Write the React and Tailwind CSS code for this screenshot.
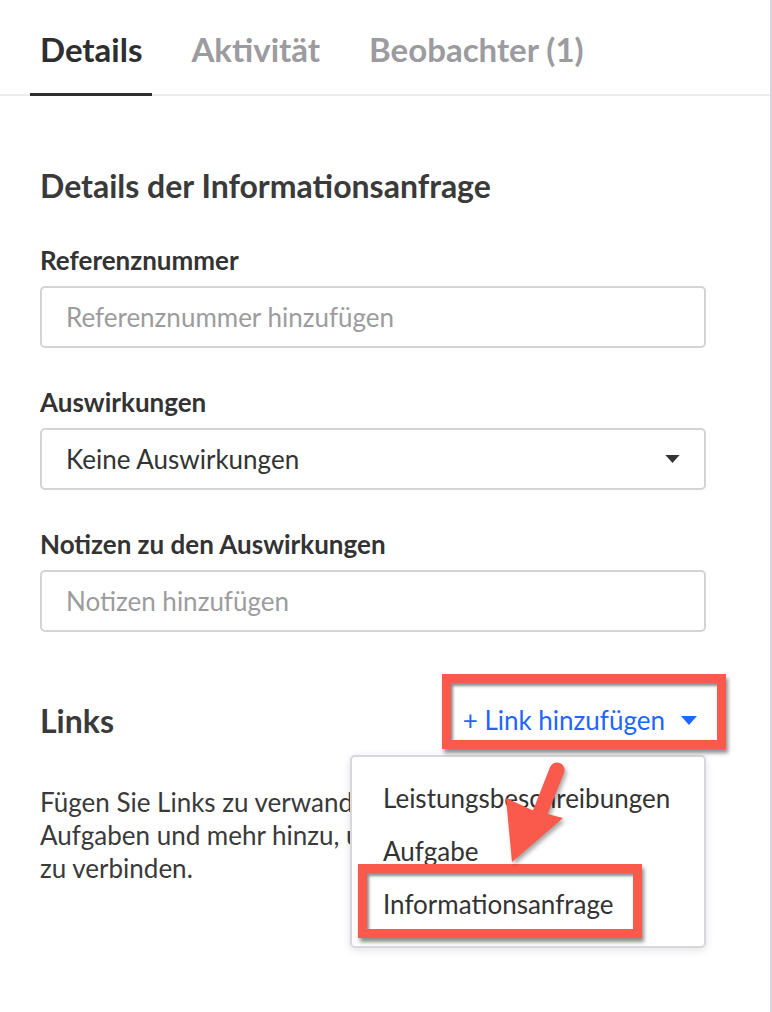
const font = { fontFamily: "Lato, 'Open Sans', sans-serif" };

function Caret({ className }) {
  return (
    <svg viewBox="0 0 16 9" className={className} fill="currentColor">
      <path d="M0 0h16L8 9z" />
    </svg>
  );
}

function Field({ label, children }) {
  return (
    <div>
      <div className="text-[26px] leading-[28px] font-bold text-[#333]">{label}</div>
      <div className="mt-3">{children}</div>
    </div>
  );
}

export default function App() {
  const tabs = ["Details", "Aktivität", "Beobachter (1)"];
  return (
    <div className="relative w-[772px] h-[1012px] bg-white border-r-2 border-[#d6d6da] overflow-hidden" style={font}>
      {/* Tabs */}
      <div className="flex gap-[29px] pl-[30px] border-b-2 border-[#ececee] h-[96px]">
        {tabs.map((t, i) => (
          <div
            key={t}
            className={
              "px-[10px] pt-[6px] flex items-center text-[33px] font-bold -mb-[2px] " +
              (i === 0 ? "text-[#2e2e30] border-b-[3px] border-[#2e2e30]" : "text-[#9b9ba0] border-b-[3px] border-transparent")
            }
          >
            {t}
          </div>
        ))}
      </div>

      <div className="pl-10 pr-[64px] pt-[73px]">
        <h2 className="text-[32px] leading-[34px] font-bold text-[#3a3a3a]">Details der Informationsanfrage</h2>

        <div className="mt-[43px] flex flex-col gap-10">
          <Field label="Referenznummer">
            <div className="h-[62px] rounded-[5px] border-2 border-[#d4d4d6] flex items-center px-[24px] text-[26px] text-[#9c9c9e]">
              Referenznummer hinzufügen
            </div>
          </Field>
          <Field label="Auswirkungen">
            <div className="h-[62px] rounded-[5px] border-2 border-[#d4d4d6] flex items-center justify-between pl-[24px] pr-[24px] text-[26px] text-[#333]">
              <span>Keine Auswirkungen</span>
              <Caret className="w-[15px] h-[8px] text-[#333]" />
            </div>
          </Field>
          <Field label="Notizen zu den Auswirkungen">
            <div className="h-[62px] rounded-[5px] border-2 border-[#d4d4d6] flex items-center px-[24px] text-[26px] text-[#9c9c9e]">
              Notizen hinzufügen
            </div>
          </Field>
        </div>

        <div className="mt-[69px] flex items-center justify-between">
          <h2 className="text-[32px] leading-[34px] font-bold text-[#3a3a3a]">Links</h2>
          <div className="flex items-center gap-4 pr-[9px] text-[26px] text-[#1f66ff]">
            <span>+ Link hinzufügen</span>
            <Caret className="w-[16px] h-[9px]" />
          </div>
        </div>

        <p className="mt-[46px] text-[26px] leading-[33px] text-[#3a3a3a]">
          Fügen Sie Links zu verwandten Elementen,
          <br />
          Aufgaben und mehr hinzu, um Informationen
          <br />
          zu verbinden.
        </p>
      </div>

      {/* Dropdown menu */}
      <div className="absolute left-[350px] top-[755px] w-[356px] h-[193px] bg-white border-2 border-[#d8d8dc] rounded-[5px] shadow-[0_2px_8px_rgba(0,0,0,0.12)] pt-[24px] pl-[31px] flex flex-col text-[26px] leading-[34px] text-[#333]">
        <div className="h-[53px]">Leistungsbeschreibungen</div>
        <div className="h-[53px]">Aufgabe</div>
        <div className="h-[53px]">Informationsanfrage</div>
      </div>

      {/* Annotation boxes */}
      <div className="absolute left-[442px] top-[674px] w-[284px] h-[75px] border-[9px] border-[#fa5a4c] shadow-[2px_4px_4px_rgba(0,0,0,0.45),inset_2px_3px_3px_rgba(0,0,0,0.45)]" />
      <div className="absolute left-[358px] top-[864px] w-[284px] h-[74px] border-[9px] border-[#fa5a4c] shadow-[2px_4px_4px_rgba(0,0,0,0.45),inset_2px_3px_3px_rgba(0,0,0,0.45)]" />

      {/* Arrow */}
      <svg className="absolute left-0 top-0 pointer-events-none" width="772" height="1012" style={{ filter: "drop-shadow(2px 3px 2px rgba(0,0,0,0.35))" }}>
        <line x1="557" y1="770" x2="538" y2="818" stroke="#fa5a4c" strokeWidth="15" strokeLinecap="round" />
        <path d="M506 798 L532 810 L563 818 L512 862 Z" fill="#fa5a4c" />
      </svg>
    </div>
  );
}
